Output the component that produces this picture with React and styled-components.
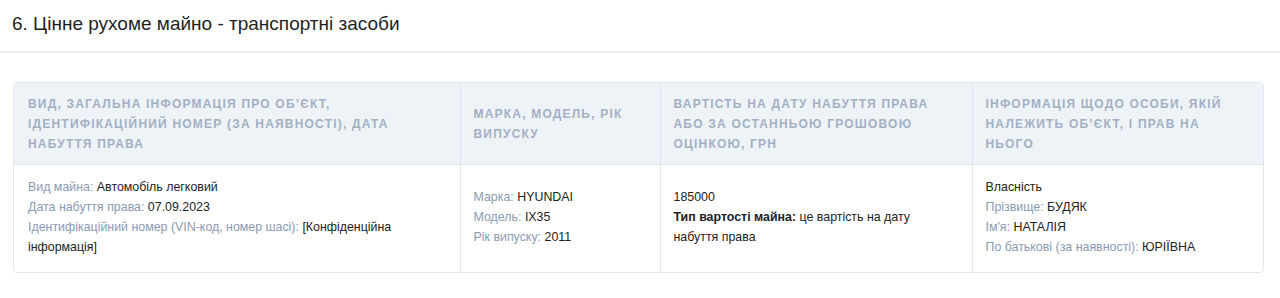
import styled, { createGlobalStyle } from 'styled-components';

const GlobalStyle = createGlobalStyle`
  body {
    margin: 0;
    background: #fff;
    font-family: "Liberation Sans", Arial, sans-serif;
    color: #222;
  }
`;

const SectionHeader = styled.div`
  height: 53px;
  box-sizing: border-box;
  padding: 13px 12px 0;
  border-bottom: 2px solid #eeeff1;
  font-size: 19px;
  line-height: 22px;
  color: #1f1f1f;
`;

const TableWrap = styled.div`
  margin: 29px 16px 0 13px;
  border: 1px solid #e2e7ee;
  border-radius: 4px;
  overflow: hidden;
`;

const Table = styled.table`
  width: 100%;
  border-collapse: collapse;
  table-layout: fixed;
`;

const Th = styled.th`
  background: #eef3f8;
  color: #a3b0c3;
  font-size: 12px;
  font-weight: bold;
  text-transform: uppercase;
  letter-spacing: 1.2px;
  line-height: 20px;
  text-align: left;
  vertical-align: middle;
  padding: 11px 14px 10px 13px;
  border-left: 1px solid #e2e7ee;
  border-bottom: 1px solid #e2e7ee;
  &:first-child { border-left: none; padding-left: 14px; }
`;

const Td = styled.td`
  font-size: 12.4px;
  line-height: 20px;
  vertical-align: middle;
  padding: 12px 16px 15px 13px;
  border-left: 1px solid #e2e7ee;
  &:first-child { border-left: none; padding-left: 14px; }
`;

const Line = styled.div``;

const Label = styled.span`
  color: #8a9ab2;
`;

const Strong = styled.b`
  font-weight: bold;
`;

const Field = ({ label, value }) => (
  <Line>
    <Label>{label}: </Label>
    {value}
  </Line>
);

export default function App() {
  return (
    <>
      <GlobalStyle />
      <SectionHeader>6. Цінне рухоме майно - транспортні засоби</SectionHeader>
      <TableWrap>
        <Table>
          <colgroup>
            <col style={{ width: 446 }} />
            <col style={{ width: 200 }} />
            <col style={{ width: 312 }} />
            <col />
          </colgroup>
          <thead>
            <tr>
              <Th>Вид, загальна інформація про об’єкт, ідентифікаційний номер (за наявності), дата набуття права</Th>
              <Th>Марка, модель, рік випуску</Th>
              <Th>Вартість на дату набуття права або за останньою грошовою оцінкою, грн</Th>
              <Th>Інформація щодо особи, якій належить об’єкт, і прав на нього</Th>
            </tr>
          </thead>
          <tbody>
            <tr>
              <Td>
                <Field label="Вид майна" value="Автомобіль легковий" />
                <Field label="Дата набуття права" value="07.09.2023" />
                <Field label="Ідентифікаційний номер (VIN-код, номер шасі)" value="[Конфіденційна інформація]" />
              </Td>
              <Td>
                <Field label="Марка" value="HYUNDAI" />
                <Field label="Модель" value="IX35" />
                <Field label="Рік випуску" value="2011" />
              </Td>
              <Td>
                <Line>185000</Line>
                <Line><Strong>Тип вартості майна:</Strong> це вартість на дату набуття права</Line>
              </Td>
              <Td>
                <Line>Власність</Line>
                <Field label="Прізвище" value="БУДЯК" />
                <Field label="Ім'я" value="НАТАЛІЯ" />
                <Field label="По батькові (за наявності)" value="ЮРІЇВНА" />
              </Td>
            </tr>
          </tbody>
        </Table>
      </TableWrap>
    </>
  );
}
